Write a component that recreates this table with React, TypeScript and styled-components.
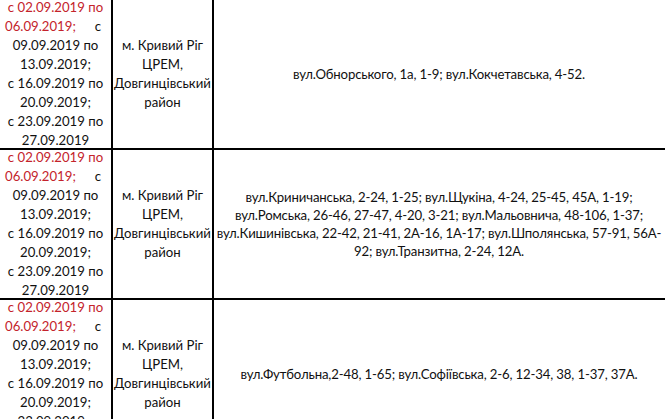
import { Fragment } from "react";
import styled, { createGlobalStyle } from "styled-components";

const GlobalStyle = createGlobalStyle`
    html, body {
        margin: 0;
        padding: 0;
        background: #ffffff;
        overflow: hidden;
    }
`;

const Sheet = styled.div`
    display: grid;
    grid-template-columns: 113px 101px 455px;
    grid-auto-rows: 150px;
    width: 669px;
    font-family: Lato, "Noto Sans", sans-serif;
    font-size: 13.2px;
    color: #111111;
`;

const Cell = styled.div<{ $last?: boolean; $lh?: number }>`
    display: flex;
    flex-direction: column;
    justify-content: center;
    align-items: center;
    text-align: center;
    overflow: hidden;
    box-sizing: border-box;
    border-right: ${(p) => (p.$last ? "none" : "2px solid #000")};
    border-bottom: 2px solid #000;
    padding: 0 1px;
    line-height: ${(p) => p.$lh ?? 19}px;
    white-space: nowrap;
`;

const AddressCell = styled(Cell)`
    letter-spacing: -0.15px;
    padding-right: 6px;
`;

const Line = styled.div`
    display: block;
`;

const SplitLine = styled.div`
    display: flex;
    justify-content: space-between;
    align-self: stretch;
    padding: 0 9px 0 4px;
`;

const Red = styled.span`
    color: #c4232b;
`;

const rows: string[][] = [
    ["вул.Обнорського, 1а, 1-9; вул.Кокчетавська, 4-52."],
    [
        "вул.Криничанська, 2-24, 1-25; вул.Щукіна, 4-24, 25-45, 45А, 1-19;",
        "вул.Ромська, 26-46, 27-47, 4-20, 3-21; вул.Мальовнича, 48-106, 1-37;",
        "вул.Кишинівська, 22-42, 21-41, 2А-16, 1А-17; вул.Шполянська, 57-91, 56А-",
        "92; вул.Транзитна, 2-24, 12А.",
    ],
    ["вул.Футбольна,2-48, 1-65; вул.Софіївська, 2-6, 12-34, 38, 1-37, 37А."],
];

function DateCell() {
    return (
        <Cell>
            <Line>
                <Red>с 02.09.2019 по</Red>
            </Line>
            <SplitLine>
                <Red>06.09.2019;</Red>
                <span>с</span>
            </SplitLine>
            <Line>09.09.2019 по</Line>
            <Line>13.09.2019;</Line>
            <Line>с 16.09.2019 по</Line>
            <Line>20.09.2019;</Line>
            <Line>с 23.09.2019 по</Line>
            <Line>27.09.2019</Line>
        </Cell>
    );
}

function PlaceCell() {
    return (
        <Cell>
            <Line>м. Кривий Ріг</Line>
            <Line>ЦРЕМ,</Line>
            <Line>Довгинцівський</Line>
            <Line>район</Line>
        </Cell>
    );
}

export default function App() {
    return (
        <>
            <GlobalStyle />
            <Sheet>
                {rows.map((addresses, i) => (
                    <Fragment key={i}>
                        <DateCell />
                        <PlaceCell />
                        <AddressCell $last $lh={18}>
                            {addresses.map((a) => (
                                <Line key={a}>{a}</Line>
                            ))}
                        </AddressCell>
                    </Fragment>
                ))}
            </Sheet>
        </>
    );
}
